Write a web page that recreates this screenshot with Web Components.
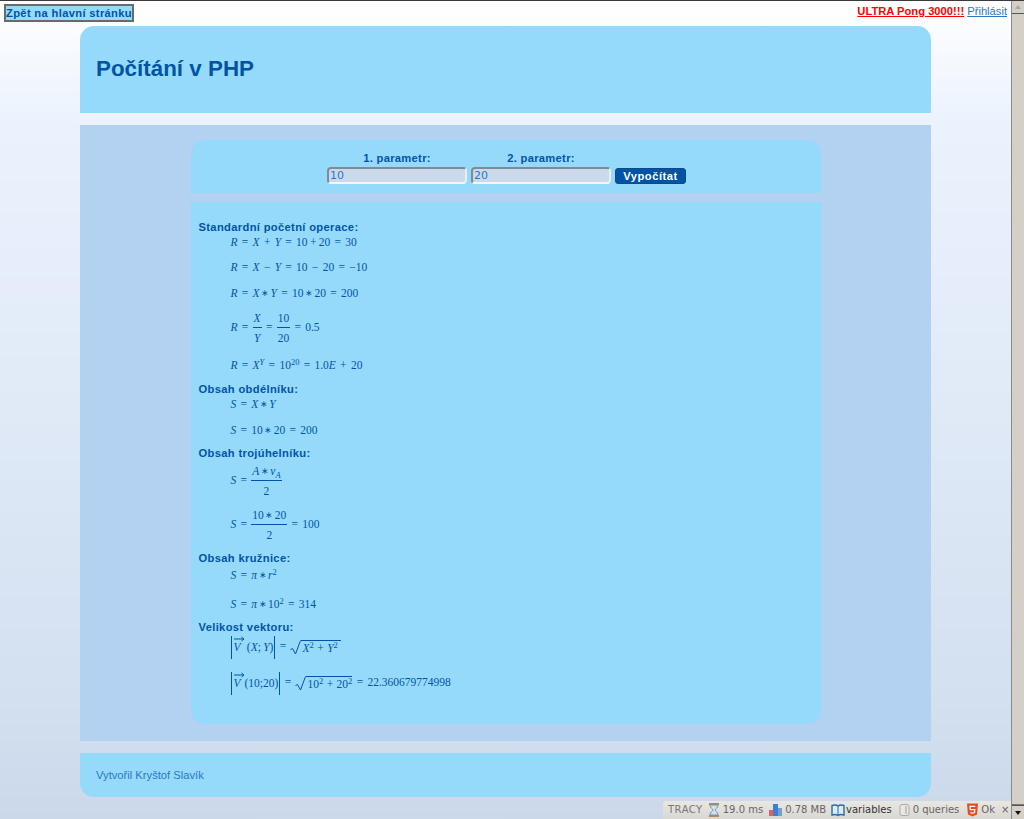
<!DOCTYPE html>
<html lang="cs">
<head>
<meta charset="utf-8">
<title>Počítání v PHP</title>
<style>
html, body { margin: 0; height: 100%; overflow: hidden; }
body { font-family: "Liberation Sans", Arial, sans-serif; color: #0054a6; }
</style>
</head>
<body>
<app-shell>
  <top-bar>
    <a slot="back" href="#">Zpět na hlavní stránku</a>
    <a slot="pong" href="#">ULTRA Pong 3000!!!</a>
    <a slot="login" href="#">Přihlásit</a>
  </top-bar>
  <page-card kind="header">Počítání v PHP</page-card>
  <main-panel>
    <calc-form a="10" b="20"></calc-form>
    <result-card>
      <math-head>Standardní početní operace:</math-head>
      <math-row h="16" after="9"><i>R</i> = <i>X</i> + <i>Y</i> = 10&thinsp;+&thinsp;20 = 30</math-row>
      <math-row h="16" after="10"><i>R</i> = <i>X</i> − <i>Y</i> = 10 − 20 = −10</math-row>
      <math-row h="16" after="7"><i>R</i> = <i>X</i><m-ast></m-ast><i>Y</i> = 10<m-ast></m-ast>20 = 200</math-row>
      <math-row h="40" after="8"><i>R</i> = <m-frac><i slot="n">X</i><i slot="d">Y</i></m-frac> = <m-frac><span slot="n">10</span><span slot="d">20</span></m-frac> = 0.5</math-row>
      <math-row h="18" after="8"><i>R</i> = <i>X</i><m-sup><i>Y</i></m-sup> = 10<m-sup>20</m-sup> = 1.0<i>E</i> + 20</math-row>
      <math-head>Obsah obdélníku:</math-head>
      <math-row h="16" after="10"><i>S</i> = <i>X</i><m-ast></m-ast><i>Y</i></math-row>
      <math-row h="16" after="8"><i>S</i> = 10<m-ast></m-ast>20 = 200</math-row>
      <math-head>Obsah trojúhelníku:</math-head>
      <math-row h="42" after="3"><i>S</i> = <m-frac><span slot="n"><i>A</i><m-ast></m-ast><i>v</i><m-sub><i>A</i></m-sub></span><span slot="d">2</span></m-frac></math-row>
      <math-row h="40" after="6"><i>S</i> = <m-frac><span slot="n">10<m-ast></m-ast>20</span><span slot="d">2</span></m-frac> = 100</math-row>
      <math-head>Obsah kružnice:</math-head>
      <math-row h="20" after="10"><i>S</i> = <i>π</i><m-ast></m-ast><i>r</i><m-sup>2</m-sup></math-row>
      <math-row h="18" after="7"><i>S</i> = <i>π</i><m-ast></m-ast>10<m-sup>2</m-sup> = 314</math-row>
      <math-head>Velikost vektoru:</math-head>
      <math-row h="26" after="11"><m-abs><m-vec></m-vec>&thinsp;(<i>X</i>;&thinsp;<i>Y</i>)</m-abs> = <m-root width="40"><i>X</i><m-sup>2</m-sup> + <i>Y</i><m-sup>2</m-sup></m-root></math-row>
      <math-row h="24" after="0"><m-abs><m-vec></m-vec>(10;20)</m-abs> = <m-root width="46">10<m-sup>2</m-sup> + 20<m-sup>2</m-sup></m-root> = 22.360679774998</math-row>
    </result-card>
  </main-panel>
  <page-card kind="footer">Vytvořil Kryštof Slavík</page-card>
  <tracy-bar slot="overlay"></tracy-bar>
</app-shell>

<script>
((global) => {
  'use strict';

  // small helper, every element is the same: open shadow root + innerHTML
  const define = (name, html) => {
    class El extends HTMLElement {
      constructor() {
        super();
        this.attachShadow({ mode: 'open' }).innerHTML = typeof html === 'function' ? html(this) : html;
      }
    }
    customElements.define(name, El);
  };

  define('app-shell', `
<style>
:host { display: flex; height: 819px; box-sizing: border-box; border-top: 1px solid #3a3a3a; position: relative; }
.page {
  flex: 1; min-width: 0; display: flex; flex-direction: column; align-items: center;
  background: linear-gradient(#ffffff 0, #eaf2fd 125px, #e0eaf7 400px, #d3e0f0 700px, #cbd8e9 819px);
}
.bar { width: 13px; flex: none; display: flex; flex-direction: column; background: #d4d0c8; border-left: 1px solid #8a8a8a; box-sizing: border-box; }
.btn { height: 12px; flex: none; display: flex; align-items: center; justify-content: center; background: #d4d0c8; border-bottom: 1px solid #555; }
.btn.down { border-bottom: 0; border-top: 1px solid #555; height: 13px; }
.thumb { flex: 1; border-bottom: 1px solid #777; }
.tri { width: 0; height: 0; border-left: 3px solid transparent; border-right: 3px solid transparent; }
.tri.up { border-bottom: 4px solid #aaa6a0; }
.tri.dn { border-top: 4px solid #111; }
</style>
<div class="page"><slot></slot></div>
<div class="bar">
  <div class="btn"><div class="tri up"></div></div>
  <div class="thumb"></div>
  <div class="btn down"><div class="tri dn"></div></div>
</div>
<slot name="overlay"></slot>
`);

  define('top-bar', `
<style>
:host { display: flex; justify-content: space-between; align-items: flex-start; align-self: stretch; height: 25px; box-sizing: border-box; padding: 3px 4px 0 4px; font-size: 11.2px; }
::slotted(a[slot=back]) { display: block; background: #96dafb; color: #0054a6; font-weight: bold; text-decoration: none; border: 2px solid #6a6a6a; padding: 0; line-height: 14px; height: 14px; letter-spacing: .33px; width: 126px; white-space: nowrap; overflow: hidden; }
::slotted(a[slot=pong]) { color: #ff0000; font-weight: bold; }
::slotted(a[slot=login]) { color: #2b78c4; margin-left: 3px; }
.right { line-height: 14px; }
</style>
<slot name="back"></slot>
<div class="right"><slot name="pong"></slot><slot name="login"></slot></div>
`);

  define('page-card', `
<style>
:host { display: block; width: 851px; box-sizing: border-box; background: #96dafb; flex: none; }
:host([kind=header]) { height: 87px; border-radius: 14px 14px 0 0; padding: 0 16px; font: bold 22.4px/86px "Liberation Sans", Arial, sans-serif; }
:host([kind=footer]) { height: 44px; border-radius: 0 0 14px 14px; padding: 0 16px; font-size: 11.2px; line-height: 44px; color: #2b78c4; }
</style>
<slot></slot>
`);

  define('main-panel', `
<style>
:host { display: flex; flex-direction: column; align-items: center; gap: 9px; width: 851px; height: 616px; box-sizing: border-box; margin: 12px 0; padding: 15px 0 17px; background: #b3d1f0; flex: none; }
</style>
<slot></slot>
`);

  define('calc-form', (el) => `
<style>
:host { display: flex; justify-content: center; align-items: flex-start; width: 630px; height: 53px; box-sizing: border-box; padding: 11px 0 0 2px; background: #96dafb; border-radius: 14px 14px 0 0; font-size: 11.2px; flex: none; }
form { display: grid; grid-template-columns: 140px 140px 71px; grid-template-rows: 15px 18px; column-gap: 4px; margin: 0; justify-items: center; }
label { font-weight: bold; letter-spacing: .3px; line-height: 14px; grid-row: 1; }
input { grid-row: 2; box-sizing: border-box; width: 140px; height: 17px; margin: 1px 0 0; padding: 0 1px; font: 11px "DejaVu Sans", sans-serif; color: #2b78c4; background: #cbd9ea; border: 2px solid; border-color: #7f8a96 #e6f0fa #f2f7fc #7f8a96; border-radius: 4px; outline: 0; }
button { grid-row: 2; box-sizing: border-box; width: 71px; height: 16px; margin: 2px 0 0; padding: 0; font: bold 11.2px "Liberation Sans", sans-serif; letter-spacing: .5px; color: #fff; background: #0054a6; border: 1px solid #0a4a8c; border-radius: 3px; }
</style>
<form onsubmit="return false">
  <label>1. parametr:</label><label>2. parametr:</label><span></span>
  <input value="${el.getAttribute('a')}"><input value="${el.getAttribute('b')}"><button>Vypočítat</button>
</form>
`);

  define('result-card', `
<style>
:host { display: block; width: 630px; height: 522px; box-sizing: border-box; padding: 18px 8px 0; background: #96dafb; border-radius: 0 0 14px 14px; flex: none; }
</style>
<slot></slot>
`);

  define('math-head', `
<style>
:host { display: block; font-size: 11.2px; font-weight: bold; line-height: 14px; letter-spacing: .33px; }
</style>
<slot></slot>
`);

  define('math-row', (el) => `
<style>
:host { display: flex; align-items: center; height: ${el.getAttribute('h')}px; margin-bottom: ${el.getAttribute('after')}px; padding-left: 32px; font: 11.5px/16px "Liberation Serif", "Times New Roman", serif; word-spacing: 1.4px; white-space: pre; }
</style>
<div><slot></slot></div>
`);

  // the row is white-space: pre, so the template's own newlines have to be switched off here
  define('m-ast', `
<style>
:host { display: inline-block; font-size: 9px; line-height: 0; margin: 0 1.5px; vertical-align: 1px; white-space: normal; }
</style>
∗
`);

  define('m-frac', `
<style>
:host { display: inline-flex; flex-direction: column; align-items: stretch; text-align: center; vertical-align: middle; }
.n { padding: 0 1px 1px; border-bottom: 1px solid currentColor; }
.d { padding: 2px 1px 0; }
</style>
<div class="n"><slot name="n"></slot></div>
<div class="d"><slot name="d"></slot></div>
`);

  define('m-sup', `
<style>
:host { display: inline-block; font-size: 8.5px; line-height: 0; vertical-align: 4px; }
</style>
<slot></slot>
`);

  define('m-sub', `
<style>
:host { display: inline-block; font-size: 8.5px; line-height: 0; vertical-align: -3px; }
</style>
<slot></slot>
`);

  define('m-abs', `
<style>
:host { display: inline-flex; align-items: flex-end; height: 23px; padding: 0 1px; vertical-align: middle; border-left: 1px solid currentColor; border-right: 1px solid currentColor; }
div { padding-bottom: 5px; line-height: 13px; white-space: pre; }
</style>
<div><slot></slot></div>
`);

  define('m-vec', `
<style>
:host { display: inline-block; margin-left: 1px; white-space: normal; }
svg { display: block; margin-bottom: -1px; }
i { font-family: "Liberation Serif", serif; }
</style>
<svg width="11" height="6" viewBox="0 0 11 6"><path d="M0 3H10M7.500 1 10 3 7.500 5" fill="none" stroke="currentColor" stroke-width="1"/></svg>
<i>V</i>
`);

  define('m-root', (el) => `
<style>
:host { display: inline-flex; align-items: stretch; height: 15px; vertical-align: middle; }
svg { display: block; flex: none; }
div { border-top: 1px solid currentColor; padding: 0 1px; width: ${el.getAttribute('width')}px; text-align: left; line-height: 15px; box-sizing: border-box; white-space: nowrap; word-spacing: .6px; }
</style>
<svg width="11" height="15" viewBox="0 0 11 15"><path d="M.5 9.500 2.500 8.500 5.500 14 10.500 .5" fill="none" stroke="currentColor" stroke-width="1"/></svg>
<div><slot></slot></div>
`);

  define('tracy-bar', `
<style>
:host { position: absolute; right: 13px; bottom: 0; width: 348px; height: 18px; box-sizing: border-box; display: flex; align-items: center; padding-left: 5px; background: linear-gradient(#e9e7e2, #d9d7d1); border-radius: 3px 0 0 0; font: 10px/18px "DejaVu Sans", sans-serif; color: #666; white-space: nowrap; }
span { display: inline-flex; align-items: center; gap: 3px; margin-right: 6px; }
.t { color: #777; margin-right: 5px; letter-spacing: .5px; }
svg { display: block; flex: none; }
.mb { margin-right: 5px; }
.dark { color: #333; gap: 1px; margin-right: 7px; }
.q { margin-right: 8px; }
</style>
<span class="t">TRACY</span>
<span><svg width="12" height="14" viewBox="0 0 12 14"><path d="M1 1H11M1 13H11" stroke="#b08a5a" stroke-width="2"/><path d="M2 2H10C10 5 7 6 7 7 7 8 10 9 10 12H2C2 9 5 8 5 7 5 6 2 5 2 2Z" fill="#cfe3f5" stroke="#6f93b5"/></svg>19.0 ms</span>
<span class="mb"><svg width="13" height="14" viewBox="0 0 13 14"><rect x="0" y="7" width="4" height="6" fill="#e0606a"/><rect x="4" y="1" width="5" height="12" fill="#3d7fd0"/><rect x="9" y="5" width="4" height="8" fill="#7a9cc8"/></svg>0.78 MB</span>
<span class="dark"><svg width="14" height="13" viewBox="0 0 14 13"><path d="M1 1.500C3 .8 5.500 .8 7 2 8.500 .8 11 .8 13 1.500V11C11 10.300 8.500 10.300 7 11.500 5.500 10.300 3 10.300 1 11Z" fill="#dcebf9" stroke="#2a6ab0" stroke-width="1.400"/><path d="M7 2V11.500" stroke="#2a6ab0"/></svg>variables</span>
<span class="q"><svg width="11" height="14" viewBox="0 0 11 14"><rect x="1" y="1.500" width="9" height="11" rx="2" fill="#e9e7e2" stroke="#aaa"/><path d="M7 3V11" stroke="#c5c3bd" stroke-width="2"/></svg>0 queries</span>
<span><svg width="11" height="14" viewBox="0 0 12 14"><path d="M0 0H12L11 12 6 14 1 12Z" fill="#e44d26"/><path d="M9 3H3.300L3.600 6.500H8.500L8.200 9.800 6 10.500 3.800 9.800" fill="none" stroke="#fff" stroke-width="1.300"/></svg>Ok</span>
<span>×</span>
`);
})(this);
</script>
</body>
</html>
